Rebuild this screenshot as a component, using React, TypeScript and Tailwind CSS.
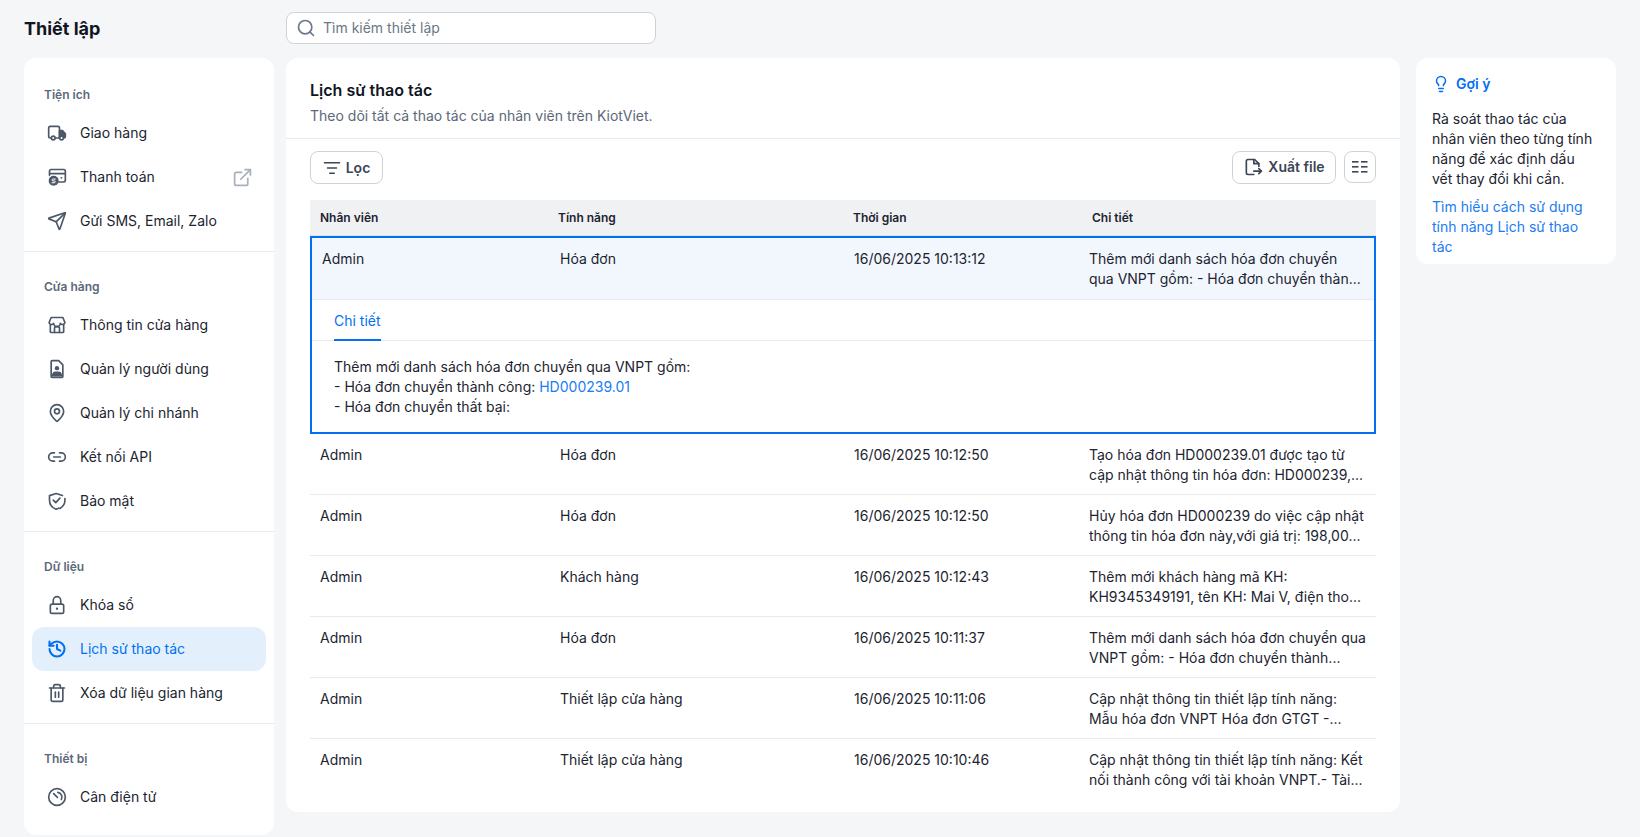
import type { ReactNode } from "react";
import { ExternalLink, History, Lightbulb, Link2, ListFilter, MapPin, Search, Send, Trash2 } from "lucide-react";

const FONT = "font-['Inter','Liberation_Sans',sans-serif]";

type MenuItem = { label: string; icon: ReactNode; external?: boolean; active?: boolean };

const iconClass = "w-5 h-5";

const Svg = ({ children }: { children: ReactNode }) => (
  <svg className={iconClass} viewBox="0 0 24 24" fill="none" stroke="currentColor" strokeWidth="2" strokeLinecap="round" strokeLinejoin="round">
    {children}
  </svg>
);

const TruckIcon = () => (
  <Svg>
    <path d="M5 18H4a2 2 0 0 1-2-2V6a2 2 0 0 1 2-2h9a2 2 0 0 1 2 2v12h-5" />
    <path d="M15 9h3.5l3.5 4v3a2 2 0 0 1-2 2h-5z" fill="currentColor" />
    <circle cx="7.5" cy="18" r="2.2" fill="#fff" />
    <circle cx="17.5" cy="18" r="2.2" fill="#fff" />
  </Svg>
);

const PaymentIcon = () => (
  <Svg>
    <path d="M3 10V5a2 2 0 0 1 2-2h15a2 2 0 0 1 2 2v11a2 2 0 0 1-2 2h-6" />
    <path d="M4 8h17" />
    <path d="M17 13h.5" />
    <circle cx="8" cy="16.5" r="6" fill="currentColor" stroke="none" />
    <path d="M10 14.5H7.2a1 1 0 0 0 0 2.2h1.6a1 1 0 0 1 0 2.2H6" stroke="#fff" strokeWidth="1.2" />
  </Svg>
);

const StoreIcon = () => (
  <Svg>
    <path d="M5 3h14l2.5 6a3 3 0 0 1-5.5 1 3.5 3.5 0 0 1-8 0 3 3 0 0 1-5.5-1z" />
    <path d="M4 12v8a1 1 0 0 0 1 1h14a1 1 0 0 0 1-1v-8" />
    <path d="M9 21v-5a2 2 0 0 1 2-2h2a2 2 0 0 1 2 2v5" />
  </Svg>
);

const UserDocIcon = () => (
  <Svg>
    <path d="M6 2h8l5 5v14a1 1 0 0 1-1 1H6a1 1 0 0 1-1-1V3a1 1 0 0 1 1-1z" />
    <circle cx="12" cy="11" r="2.6" fill="currentColor" stroke="none" />
    <path d="M6 21v-2a4.5 4.5 0 0 1 4.5-4h3a4.5 4.5 0 0 1 4.5 4v2z" fill="currentColor" stroke="none" />
  </Svg>
);

const ShieldIcon = () => (
  <Svg>
    <path d="M14 20.5a7 7 0 0 1-3 1.3C6 20 3 16 3 11V5.5L11 3l7.5 2.5" />
    <path d="M21.5 9v2.5c0 4-2.5 7.5-6 9.5" />
    <path d="M7.5 11l3 3 5-5.5" />
  </Svg>
);

const LockIcon = () => (
  <Svg>
    <path d="M7.5 11V6.5a4.5 4.5 0 0 1 9 0V11" />
    <rect x="4" y="11" width="16" height="11" rx="2" />
    <circle cx="12" cy="16.5" r="1.4" fill="currentColor" stroke="none" />
  </Svg>
);

const ScaleIcon = () => (
  <Svg>
    <circle cx="12" cy="12" r="10" />
    <path d="M13 6.5a5.7 5.7 0 0 1 4.2 8.5" />
    <path d="M8 8l4.5 4.5" />
  </Svg>
);

const ExportIcon = () => (
  <Svg>
    <path d="M13 3v5h6v3" />
    <path d="M19 8l-5-5H6a2 2 0 0 0-2 2v14a2 2 0 0 0 2 2h7" />
    <path d="M13 17h9" />
    <path d="M19 14l3 3-3 3" />
  </Svg>
);

const menu: { title: string; items: MenuItem[] }[] = [
  {
    title: "Tiện ích",
    items: [
      { label: "Giao hàng", icon: <TruckIcon /> },
      { label: "Thanh toán", icon: <PaymentIcon />, external: true },
      { label: "Gửi SMS, Email, Zalo", icon: <Send className={iconClass} /> },
    ],
  },
  {
    title: "Cửa hàng",
    items: [
      { label: "Thông tin cửa hàng", icon: <StoreIcon /> },
      { label: "Quản lý người dùng", icon: <UserDocIcon /> },
      { label: "Quản lý chi nhánh", icon: <MapPin className={iconClass} /> },
      { label: "Kết nối API", icon: <Link2 className={iconClass} /> },
      { label: "Bảo mật", icon: <ShieldIcon /> },
    ],
  },
  {
    title: "Dữ liệu",
    items: [
      { label: "Khóa sổ", icon: <LockIcon /> },
      { label: "Lịch sử thao tác", icon: <History className={iconClass} strokeWidth={2.5} />, active: true },
      { label: "Xóa dữ liệu gian hàng", icon: <Trash2 className={iconClass} /> },
    ],
  },
  {
    title: "Thiết bị",
    items: [{ label: "Cân điện tử", icon: <ScaleIcon /> }],
  },
];

const rows = [
  ["Hóa đơn", "16/06/2025 10:12:50", "Tạo hóa đơn HD000239.01 được tạo từ", "cập nhật thông tin hóa đơn: HD000239,..."],
  ["Hóa đơn", "16/06/2025 10:12:50", "Hủy hóa đơn HD000239 do việc cập nhật", "thông tin hóa đơn này,với giá trị: 198,00..."],
  ["Khách hàng", "16/06/2025 10:12:43", "Thêm mới khách hàng mã KH:", "KH9345349191, tên KH: Mai V, điện tho..."],
  ["Hóa đơn", "16/06/2025 10:11:37", "Thêm mới danh sách hóa đơn chuyển qua", "VNPT gồm: - Hóa đơn chuyển thành..."],
  ["Thiết lập cửa hàng", "16/06/2025 10:11:06", "Cập nhật thông tin thiết lập tính năng:", "Mẫu hóa đơn VNPT Hóa đơn GTGT -..."],
  ["Thiết lập cửa hàng", "16/06/2025 10:10:46", "Cập nhật thông tin thiết lập tính năng: Kết", "nối thành công với tài khoản VNPT.- Tài..."],
];

const Sidebar = () => (
  <aside className="w-[250px] shrink-0 h-[777px] bg-white rounded-xl">
    {menu.map((group, i) => (
      <div key={group.title} className={i > 0 ? "border-t border-[#e8eaed] pt-[23px] pb-2" : "pt-[25px] pb-2"}>
        <div className="pl-5 h-6 flex items-center text-xs font-semibold text-[#5c6878]">{group.title}</div>
        <div className="px-2 mt-1">
          {group.items.map((item) => (
            <div
              key={item.label}
              className={`h-11 flex items-center pl-[15px] pr-[13px] rounded-xl text-sm ${
                item.active ? "bg-[#e3f0fc] text-[#0070f4]" : "text-[#1c2430]"
              }`}
            >
              <span className={`w-5 mr-[13px] flex justify-center ${item.active ? "text-[#0070f4]" : "text-[#4c5868]"}`}>{item.icon}</span>
              <span className="flex-1">{item.label}</span>
              {item.external && <ExternalLink className="w-[21px] h-[21px] text-[#a9b1bc]" />}
            </div>
          ))}
        </div>
      </div>
    ))}
  </aside>
);

const Cell = ({ children, className = "" }: { children: ReactNode; className?: string }) => (
  <div className={`shrink-0 ${className}`}>{children}</div>
);

const Table = () => (
  <div className="mx-6 mt-4 text-sm text-[#1c2430]">
    <div className="h-9 flex items-center bg-[#f0f1f3] text-xs font-semibold border-b border-[#e0e2e5]">
      <Cell className="w-[248px] pl-[10px]">Nhân viên</Cell>
      <Cell className="w-[295px]">Tính năng</Cell>
      <Cell className="w-[239px]">Thời gian</Cell>
      <Cell>Chi tiết</Cell>
    </div>

    <div className="border-2 border-[#0070f4] h-[198px]">
      <div className="h-[62px] bg-[#f2f7fe] border-b border-[#e8eaed] flex pt-[11px] leading-5">
        <Cell className="w-[248px] pl-[10px]">Admin</Cell>
        <Cell className="w-[294px]">Hóa đơn</Cell>
        <Cell className="w-[235px]">16/06/2025 10:13:12</Cell>
        <Cell className="whitespace-nowrap">
          Thêm mới danh sách hóa đơn chuyển
          <br />
          qua VNPT gồm: - Hóa đơn chuyển thàn...
        </Cell>
      </div>
      <div className="h-[41px] border-b border-[#e8eaed] pl-[22px] flex">
        <div className="text-[#0070f4] h-[41px] leading-[42px] border-b-2 border-[#0070f4]">Chi tiết</div>
      </div>
      <div className="pl-[22px] pt-4 leading-5">
        <div>Thêm mới danh sách hóa đơn chuyển qua VNPT gồm:</div>
        <div>
          - Hóa đơn chuyển thành công: <span className="text-[#1a7cf2]">HD000239.01</span>
        </div>
        <div>- Hóa đơn chuyển thất bại:</div>
      </div>
    </div>

    {rows.map((row, i) => (
      <div key={i} className={`h-[61px] flex pt-[11px] leading-5 ${i < rows.length - 1 ? "border-b border-[#e8eaed]" : ""}`}>
        <Cell className="w-[250px] pl-[10px]">Admin</Cell>
        <Cell className="w-[294px]">{row[0]}</Cell>
        <Cell className="w-[235px]">{row[1]}</Cell>
        <Cell className="whitespace-nowrap">
          {row[2]}
          <br />
          {row[3]}
        </Cell>
      </div>
    ))}
  </div>
);

export default function App() {
  return (
    <div className={`${FONT} w-[1640px] h-[837px] overflow-hidden bg-[#f5f6f8] pl-6`}>
      <div className="h-[58px] flex items-start">
        <div className="w-[262px] pt-[15px] text-lg font-bold leading-7 text-[#10161f]">Thiết lập</div>
        <div className="mt-3 w-[370px] h-8 rounded-lg border border-[#cfd3d9] bg-white flex items-center pl-[9px] text-sm text-[#6c7785]">
          <Search className="w-5 h-5 mr-[7px] text-[#69788a]" />
          Tìm kiếm thiết lập
        </div>
      </div>

      <div className="flex items-start gap-3">
        <Sidebar />

        <main className="w-[1114px] h-[754px] bg-white rounded-xl">
          <div className="h-[81px] px-6 pt-5 border-b border-[#e8eaed]">
            <h1 className="text-base font-semibold leading-6 text-[#10161f]">Lịch sử thao tác</h1>
            <p className="text-sm leading-5 mt-1 text-[#5c6878]">Theo dõi tất cả thao tác của nhân viên trên KiotViet.</p>
          </div>

          <div className="px-6 pt-3 flex justify-between items-start">
            <button className="h-[33px] w-[73px] rounded-lg border border-[#cfd3d9] flex items-center justify-center gap-[5px] text-sm font-semibold text-[#3c4654]">
              <ListFilter className="w-[18px] h-[18px]" />
              Lọc
            </button>
            <div className="flex gap-2">
              <button className="h-[33px] w-[104px] rounded-lg border border-[#cfd3d9] flex items-center justify-center gap-[5px] pb-px text-sm font-semibold text-[#3c4654]">
                <ExportIcon />
                Xuất file
              </button>
              <button className="h-8 w-8 rounded-lg border border-[#cfd3d9] flex items-center justify-center text-[#3c4654]">
                <svg width="16" height="12" viewBox="0 0 16 12" fill="currentColor">
                  <rect x="0" y="0" width="6.5" height="1.6" />
                  <rect x="9" y="0" width="6.5" height="1.6" />
                  <rect x="0" y="5" width="6.5" height="1.6" />
                  <rect x="9" y="5" width="6.5" height="1.6" />
                  <rect x="0" y="10" width="6.5" height="1.6" />
                  <rect x="9" y="10" width="6.5" height="1.6" />
                </svg>
              </button>
            </div>
          </div>

          <Table />
        </main>

        <section className="ml-1 w-[200px] h-[206px] bg-white rounded-xl pl-4 pr-[18px] pt-4 text-sm leading-5 text-[#1c2430]">
          <div className="flex items-center gap-[6px] text-[#0070f4] font-semibold h-5 mb-[15px]">
            <Lightbulb className="w-[18px] h-[18px]" />
            Gợi ý
          </div>
          <p>Rà soát thao tác của nhân viên theo từng tính năng để xác định dấu vết thay đổi khi cần.</p>
          <p className="mt-2 text-[#1a7cf2]">Tìm hiểu cách sử dụng tính năng Lịch sử thao tác</p>
        </section>
      </div>
    </div>
  );
}
